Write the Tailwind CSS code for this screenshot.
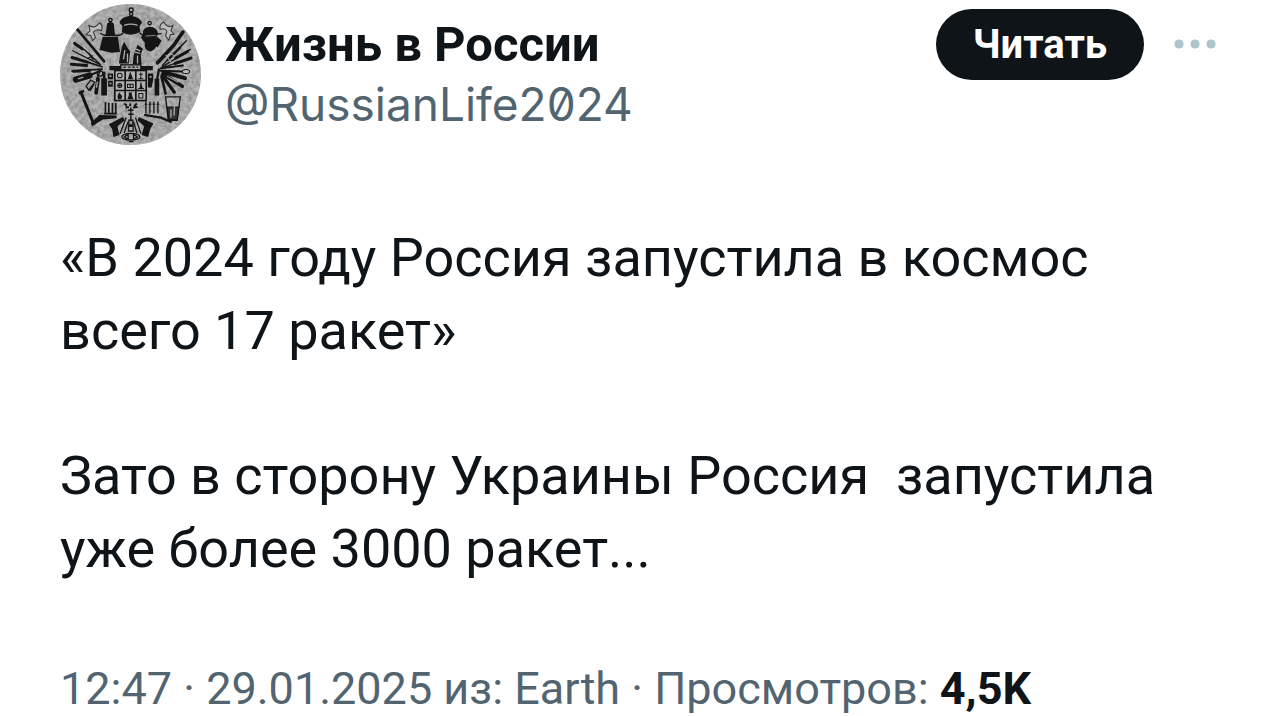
<!DOCTYPE html>
<html lang="ru">
<head>
  <meta charset="UTF-8" />
  <meta name="viewport" content="width=device-width, initial-scale=1" />
  <title>Жизнь в России</title>
  <script src="https://cdn.jsdelivr.net/npm/@tailwindcss/browser@4"></script>
</head>
<body class="bg-white text-[#0f1419] font-[Roboto,sans-serif] overflow-hidden">

  <article class="pl-[60px] pr-16 pt-1">

    <!-- Header -->
    <header class="flex items-start">
      <a href="#" aria-label="Жизнь в России" class="shrink-0">
        <svg class="w-[141px] h-[141px]" viewBox="30 12 422 422" fill="none" stroke="#151515">
          <defs>
            <clipPath id="round"><circle cx="241" cy="223" r="211" /></clipPath>
            <filter id="paper" x="0" y="0" width="100%" height="100%">
              <feTurbulence type="fractalNoise" baseFrequency="0.08" numOctaves="3" seed="4" />
              <feColorMatrix values="0 0 0 0 0  0 0 0 0 0  0 0 0 0 0  0.45 0 0 0 -0.15" />
            </filter>
          </defs>
          <g clip-path="url(#round)">
            <rect x="30" y="12" width="422" height="422" fill="#b4b4b4" stroke="none" />
            <rect x="30" y="12" width="422" height="422" filter="url(#paper)" stroke="none" />

            <!-- caps, bell and ribbons -->
            <g fill="#151515" stroke="none">
              <path d="M208 68Q212 52 236 48L246 48Q271 53 276 68L268 78L270 96Q241 112 215 96L217 78Z" />
              <path d="M171 70Q181 62 191 70L194 101L200 108H160L167 101Z" />
              <path d="M158 110H203L210 156L184 158L148 150Z" />
              <path d="M278 102Q276 82 298 80Q320 80 324 102L316 112L320 124Q320 150 300 154Q280 150 284 128L272 112Z" />
              <path d="M318 108L334 122L322 142L308 132Z" />
              <path d="M215 140L222 124L230 140L240 154L236 190H206L210 166Z" />
              <path d="M250 166L262 134L278 146L272 164L274 192H248Z" />
            </g>
            <g stroke-width="4">
              <circle cx="243" cy="30" r="6" /><circle cx="243" cy="42" r="5" />
              <circle cx="181" cy="60" r="5" /><circle cx="298" cy="69" r="5" />
              <path d="M194 106Q212 108 220 98M268 98Q276 106 286 104M150 100L164 106M322 102L334 100" />
            </g>
            <g fill="#bdbdbd" stroke="#333" stroke-width="3">
              <path d="M116 76Q134 88 148 68Q160 76 154 92Q140 84 130 96L136 112L128 122L122 106L108 104L120 92Z" />
              <path d="M368 76Q352 86 340 66Q326 74 330 88Q344 82 350 94L346 108L356 120L360 104L372 102L362 92Z" />
            </g>
            <path d="M222 76Q242 68 262 76M224 150L220 178M232 160V186M256 146L270 152M254 156L270 160M262 166V190" stroke="#aaa" stroke-width="4" />
            <path d="M286 108L316 106M210 120V148" stroke="#888" stroke-width="3" />

            <!-- blades on the left wing -->
            <g stroke-linecap="round">
              <path d="M82 88L162 184" stroke-width="8" />
              <path d="M72 128L104 150L150 192M68 152L152 194" stroke-width="4" />
              <path d="M74 130L96 146M66 172L112 186M64 192L110 196" stroke-width="9" />
              <path d="M112 186L156 200M66 213L156 207" stroke-width="5" />
              <path d="M70 213L118 211" stroke-width="9" />
              <path d="M78 238L118 226" stroke-width="19" />
              <path d="M118 226L150 212" stroke-width="6" />
              <path d="M162 234V286" stroke-width="17" stroke-linecap="butt" />
              <path d="M162 218V236" stroke-width="8" />
              <path d="M144 236L138 278" stroke-width="11" />
            </g>
            <g stroke-width="4">
              <path d="M108 258L122 240L134 246L116 270ZM120 272L132 252M150 214L138 240M112 176L128 166M116 158L130 180" />
              <circle cx="150" cy="220" r="8" />
            </g>
            <path d="M84 236L100 231M142 244L139 262" stroke="#aaa" stroke-width="4" />

            <!-- blades on the right wing -->
            <g stroke-linecap="round">
              <path d="M398 96L370 136L322 188" stroke-width="11" />
              <path d="M408 122L336 196" stroke-width="4" />
              <path d="M390 142L352 180" stroke-width="7" />
              <path d="M420 148L336 200M424 172L340 202" stroke-width="4" />
              <path d="M412 154L376 174M422 174L374 190" stroke-width="9" />
              <path d="M332 204L398 196M330 212L396 214" stroke-width="6" />
              <path d="M340 216L404 234" stroke-width="12" />
              <path d="M338 222L396 258" stroke-width="11" />
              <path d="M336 226L372 276" stroke-width="10" />
              <path d="M334 230L346 280" stroke-width="8" />
              <path d="M320 236V286" stroke-width="14" stroke-linecap="butt" />
              <path d="M326 208L320 240" stroke-width="7" />
            </g>
            <ellipse cx="407" cy="214" rx="11" ry="6" fill="#bdbdbd" stroke-width="3" />
            <path d="M346 164L362 186M360 160L374 168M350 228L384 246" stroke="#aaa" stroke-width="3" />

            <!-- shield with nine fields -->
            <rect x="194" y="211" width="94" height="90" fill="#b0b0b0" stroke-width="5" />
            <path d="M225 211V301M257 211V301M194 241H288M194 271H288" stroke-width="5" />
            <path d="M178 204H212M272 204H308" stroke-width="13" />
            <rect x="212" y="194" width="60" height="15" stroke-width="4" />
            <path d="M220 201H264" stroke-width="4" stroke-dasharray="8 5" />
            <g stroke-width="3">
              <circle cx="209" cy="226" r="7" /><circle cx="209" cy="256" r="6" />
              <path d="M202 256H216M209 249V263M232 252H249V262H232ZM240 252V262" />
              <path d="M272 217V236M266 222H278M265 236H279M272 246V264M264 265H281M266 280H278V293H266Z" />
            </g>
            <g fill="#151515" stroke="none">
              <path d="M233 237L240 214L249 237Z" />
              <path d="M202 288L207 276L216 288L213 297H204Z" />
              <path d="M232 297L236 286L236 277H245V286L250 297Z" />
              <path d="M268 264L272 248L278 264Z" />
              <path d="M173 220H189V237H173ZM174 242H188V260H174Z" />
              <path d="M293 220H309V238L304 262H293Z" />
            </g>
            <path d="M178 228H184M178 250H184M298 230H304" stroke="#aaa" stroke-width="5" />

            <!-- axe, forks and glass -->
            <path d="M91 272L132 374" stroke-width="9" />
            <path d="M86 280L102 272" stroke-width="7" />
            <path d="M122 368L148 344L198 346L200 354L158 358L126 378Z" fill="#151515" stroke="none" />
            <path d="M166 306V340M176 308V340M187 308V340M197 308V340M162 340H200" stroke-width="5" />
            <path d="M287 304V340M299 304V340M311 304V340M323 304V340" stroke-width="4" />
            <path d="M283 312H291M295 312H303M307 312H315M319 312H327" stroke-width="3" />
            <path d="M282 344L332 352L364 366" stroke-width="7" />
            <path d="M346 290H390L381 360H354Z" stroke-width="4" />
            <path d="M351 320H385L380 358H356Z" fill="#333" stroke-width="3" />
            <path d="M362 328V352M374 296L371 346" stroke="#aaa" stroke-width="4" />

            <!-- pistols and tail -->
            <g fill="#151515" stroke="none">
              <path d="M176 372L218 350L224 360L202 378L208 404L190 410L186 386Z" />
              <path d="M310 370L266 350L262 360L282 378L274 404L294 410L300 386Z" />
            </g>
            <g stroke-width="4">
              <path d="M242 322V360M234 330H250M234 342H250M228 352L210 400M256 352L272 400M234 364L222 398M250 364L260 398" />
              <path d="M236 360H248V374H236ZM235 378H249V392H235Z" />
              <ellipse cx="242" cy="409" rx="27" ry="10" />
              <path d="M222 410L234 402V416ZM262 410L250 402V416ZM236 424H250" />
            </g>
            <path d="M222 310L230 316M240 310V318M260 310L252 318M226 322L236 320M248 322L262 320" stroke-width="6" />
          </g>
        </svg>
      </a>

      <div class="ml-6 mt-3 grow min-w-0">
        <h1 class="text-[49px] leading-[58px] font-bold">Жизнь в России</h1>
        <p class="text-[46px] leading-[60px] text-[#536471] font-[Inter,sans-serif] slashed-zero">@RussianLife2024</p>
      </div>

      <button type="button" class="mt-[5px] h-[71px] w-52 shrink-0 rounded-full bg-[#0f1419] text-white text-[40px] leading-none font-bold">Читать</button>
      <button type="button" aria-label="Ещё" class="ml-[30px] mt-[30px] shrink-0">
        <svg class="w-[42px] h-5" viewBox="0 0 42 20" fill="#b0c4cb">
          <circle cx="5" cy="10" r="4.6" />
          <circle cx="21" cy="10" r="4.6" />
          <circle cx="37" cy="10" r="4.6" />
        </svg>
      </button>
    </header>

    <!-- Text -->
    <div class="mt-[76px] text-[54px] leading-[73px]">
      <p>«В 2024 году Россия запустила в космос <br />всего 17 ракет»</p>
      <p class="mt-[72px]">Зато в сторону Украины Россия&nbsp; запустила <br />уже более 3000 ракет...</p>
    </div>

    <!-- Date and views -->
    <footer class="mt-[74px] text-[45px] leading-[60px] text-[#536471]">
      <time datetime="2025-01-29T12:47">12:47 · 29.01.2025</time> из: Earth · Просмотров: <strong class="font-bold text-[#0f1419]">4,5K</strong>
    </footer>

  </article>

</body>
</html>
